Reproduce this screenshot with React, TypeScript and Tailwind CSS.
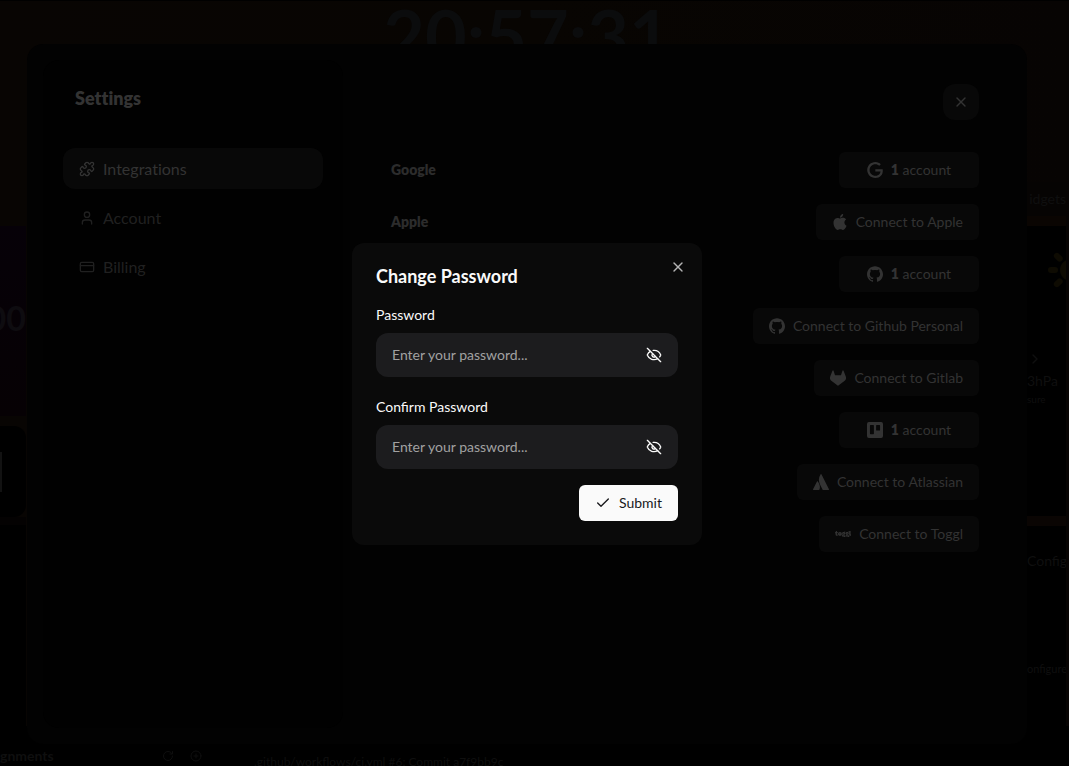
import { Check, ChevronRight, CirclePlus, CreditCard, EyeOff, Puzzle, RotateCw, Sun, User, X } from "lucide-react";
import {
  SiApple,
  SiAtlassian,
  SiGithub,
  SiGitlab,
  SiGoogle,
  SiToggl,
  SiTrello,
} from "react-icons/si";

const navItems = [
  { label: "Integrations", icon: Puzzle, active: true },
  { label: "Account", icon: User, active: false },
  { label: "Billing", icon: CreditCard, active: false },
];

const integrations = [
  { name: "Google", icon: SiGoogle, accounts: 1 },
  { name: "Apple", icon: SiApple, accounts: 0 },
  { name: "Github", icon: SiGithub, accounts: 1 },
  { name: "Github Personal", icon: SiGithub, accounts: 0 },
  { name: "Gitlab", icon: SiGitlab, accounts: 0 },
  { name: "Trello", icon: SiTrello, accounts: 1 },
  { name: "Atlassian", icon: SiAtlassian, accounts: 0 },
  { name: "Toggl", icon: SiToggl, accounts: 0 },
];

function Dashboard() {
  return (
    <div className="fixed inset-0 flex flex-col overflow-hidden border-t border-black bg-gradient-to-r from-[#080503] via-[#080502] to-[#070403]">
      <header className="flex h-[181px] shrink-0 justify-center overflow-hidden pr-[15px]">
        <time className="text-[72px] leading-[68px] font-bold text-[#0b0c0d]">20:57:31</time>
      </header>

      <div className="flex h-[544px] shrink-0 justify-between">
        <div className="flex w-[26px] flex-col overflow-hidden">
          <div className="h-11 shrink-0" />
          <div className="flex h-[190px] shrink-0 items-center justify-end bg-gradient-to-b from-[#060108] to-[#060104] pb-2 text-[34px] font-bold text-[#0e0c10]">
            00
          </div>
          <div className="h-[10px] shrink-0" />
          <div className="flex h-[91px] shrink-0 items-center rounded-r-xl bg-black">
            <div className="h-10 w-[2px] bg-[#121212]" />
          </div>
          <div className="h-2 shrink-0 bg-[#040202]" />
          <div className="grow bg-black" />
        </div>

        <div className="flex w-[42px] flex-col overflow-hidden pr-[3px] text-sm whitespace-nowrap text-[#0f0f0f]">
          <div className="flex h-[34px] shrink-0 items-center justify-end bg-[#060403]">idgets</div>
          <div className="h-[10px] shrink-0 bg-[#0a0502]" />
          <div className="flex h-[290px] shrink-0 flex-col overflow-hidden bg-black">
            <Sun className="mt-5 ml-5 size-12 shrink-0 text-[#0e0b02]" strokeWidth={3} />
            <ChevronRight className="mt-[57px] size-4 shrink-0" />
            <div className="mt-1">3hPa</div>
            <div className="text-[10px] leading-4">sure</div>
          </div>
          <div className="h-[10px] shrink-0 bg-[#0a0503]" />
          <div className="flex grow flex-col overflow-hidden bg-black pt-[25px]">
            <div>Config</div>
            <div className="mt-[90px] text-[11px]">onfigure</div>
          </div>
        </div>
      </div>

      <footer className="flex grow bg-black whitespace-nowrap text-[#0f0f0f]">
        <div className="flex w-[210px] shrink-0 items-start gap-4 overflow-hidden pt-5 text-sm">
          <span className="w-[146px] leading-5 font-bold">gnments</span>
          <RotateCw className="mt-1 size-3 shrink-0" />
          <CirclePlus className="mt-1 size-3 shrink-0" />
        </div>
        <div className="grow overflow-hidden pt-7 pl-11 text-xs">.github/workflows/ci.yml #6: Commit a7f9bb9c</div>
      </footer>
    </div>
  );
}

function SettingsPanel() {
  return (
    <div className="fixed inset-0 flex pt-11 pr-[42px] pb-[22px] pl-[27px]">
      <section className="flex grow rounded-2xl bg-[#020202] p-4">
        <aside className="w-[300px] shrink-0 rounded-2xl bg-[#010101] p-5 [font-variant-ligatures:none]">
          <h1 className="px-3 pt-1 text-lg leading-7 font-extrabold text-[#333333]">Settings</h1>
          <nav className="mt-9 flex flex-col gap-2">
            {navItems.map(({ label, icon: Icon, active }) => (
              <a
                key={label}
                href="#"
                className={
                  active
                    ? "flex h-[41px] items-center gap-2 rounded-xl bg-[#080808] px-4 text-[#333333]"
                    : "flex h-[41px] items-center gap-2 rounded-xl px-4 text-[#202020]"
                }
              >
                <Icon className="size-4" />
                {label}
              </a>
            ))}
          </nav>
        </aside>

        <div className="grow pt-6 pr-8 pl-12">
          <div className="flex justify-end">
            <button
              type="button"
              aria-label="Close settings"
              className="flex size-9 items-center justify-center rounded-xl bg-[#080808] text-[#333333]"
            >
              <X className="size-4" />
            </button>
          </div>
          <ul className="mt-8 flex flex-col gap-4 text-sm text-[#333333]">
            {integrations.map(({ name, icon: Icon, accounts }) => (
              <li key={name} className="flex items-center justify-between">
                <span className="font-extrabold text-[#2c2c2c]">{name}</span>
                <button
                  type="button"
                  className="flex h-9 min-w-[140px] items-center justify-center gap-2 rounded-md bg-[#080808] px-4"
                >
                  <Icon className="size-4" />
                  {accounts > 0 ? (
                    <span>
                      <b className="font-extrabold">{accounts}</b> account
                    </span>
                  ) : (
                    <span>Connect to {name}</span>
                  )}
                </button>
              </li>
            ))}
          </ul>
        </div>
      </section>
    </div>
  );
}

function PasswordField({ id, label }: { id: string; label: string }) {
  return (
    <div className="flex flex-col gap-2">
      <label htmlFor={id} className="text-sm leading-5">
        {label}
      </label>
      <div className="flex h-11 items-center rounded-xl bg-[#1c1c1e] px-4">
        <input
          id={id}
          type="password"
          placeholder="Enter your password..."
          className="min-w-0 grow bg-transparent text-sm outline-none placeholder:text-[#a1a1a1]"
        />
        <button type="button" aria-label="Show password">
          <EyeOff className="size-4" />
        </button>
      </div>
    </div>
  );
}

function ChangePasswordDialog() {
  return (
    <div className="fixed inset-0 flex items-center justify-center pt-[22px] pr-[15px]">
      <div
        role="dialog"
        aria-labelledby="dialog-title"
        className="relative w-[350px] rounded-xl bg-[#0a0a0a] p-6 text-[#fafafa]"
      >
        <h2 id="dialog-title" className="text-lg leading-[18px] font-bold">
          Change Password
        </h2>
        <button type="button" aria-label="Close" className="absolute top-4 right-4 text-[#b4b4b4]">
          <X className="size-4" />
        </button>
        <form className="mt-5 flex flex-col gap-5">
          <PasswordField id="password" label="Password" />
          <PasswordField id="confirm-password" label="Confirm Password" />
          <button
            type="submit"
            className="-mt-1 flex h-9 items-center gap-2 self-end rounded-md bg-[#fafafa] px-4 text-sm text-[#18181b]"
          >
            <Check className="size-4" />
            Submit
          </button>
        </form>
      </div>
    </div>
  );
}

export default function App() {
  return (
    <main className="min-h-screen bg-black font-['Lato',sans-serif]">
      <Dashboard />
      <SettingsPanel />
      <ChangePasswordDialog />
    </main>
  );
}
